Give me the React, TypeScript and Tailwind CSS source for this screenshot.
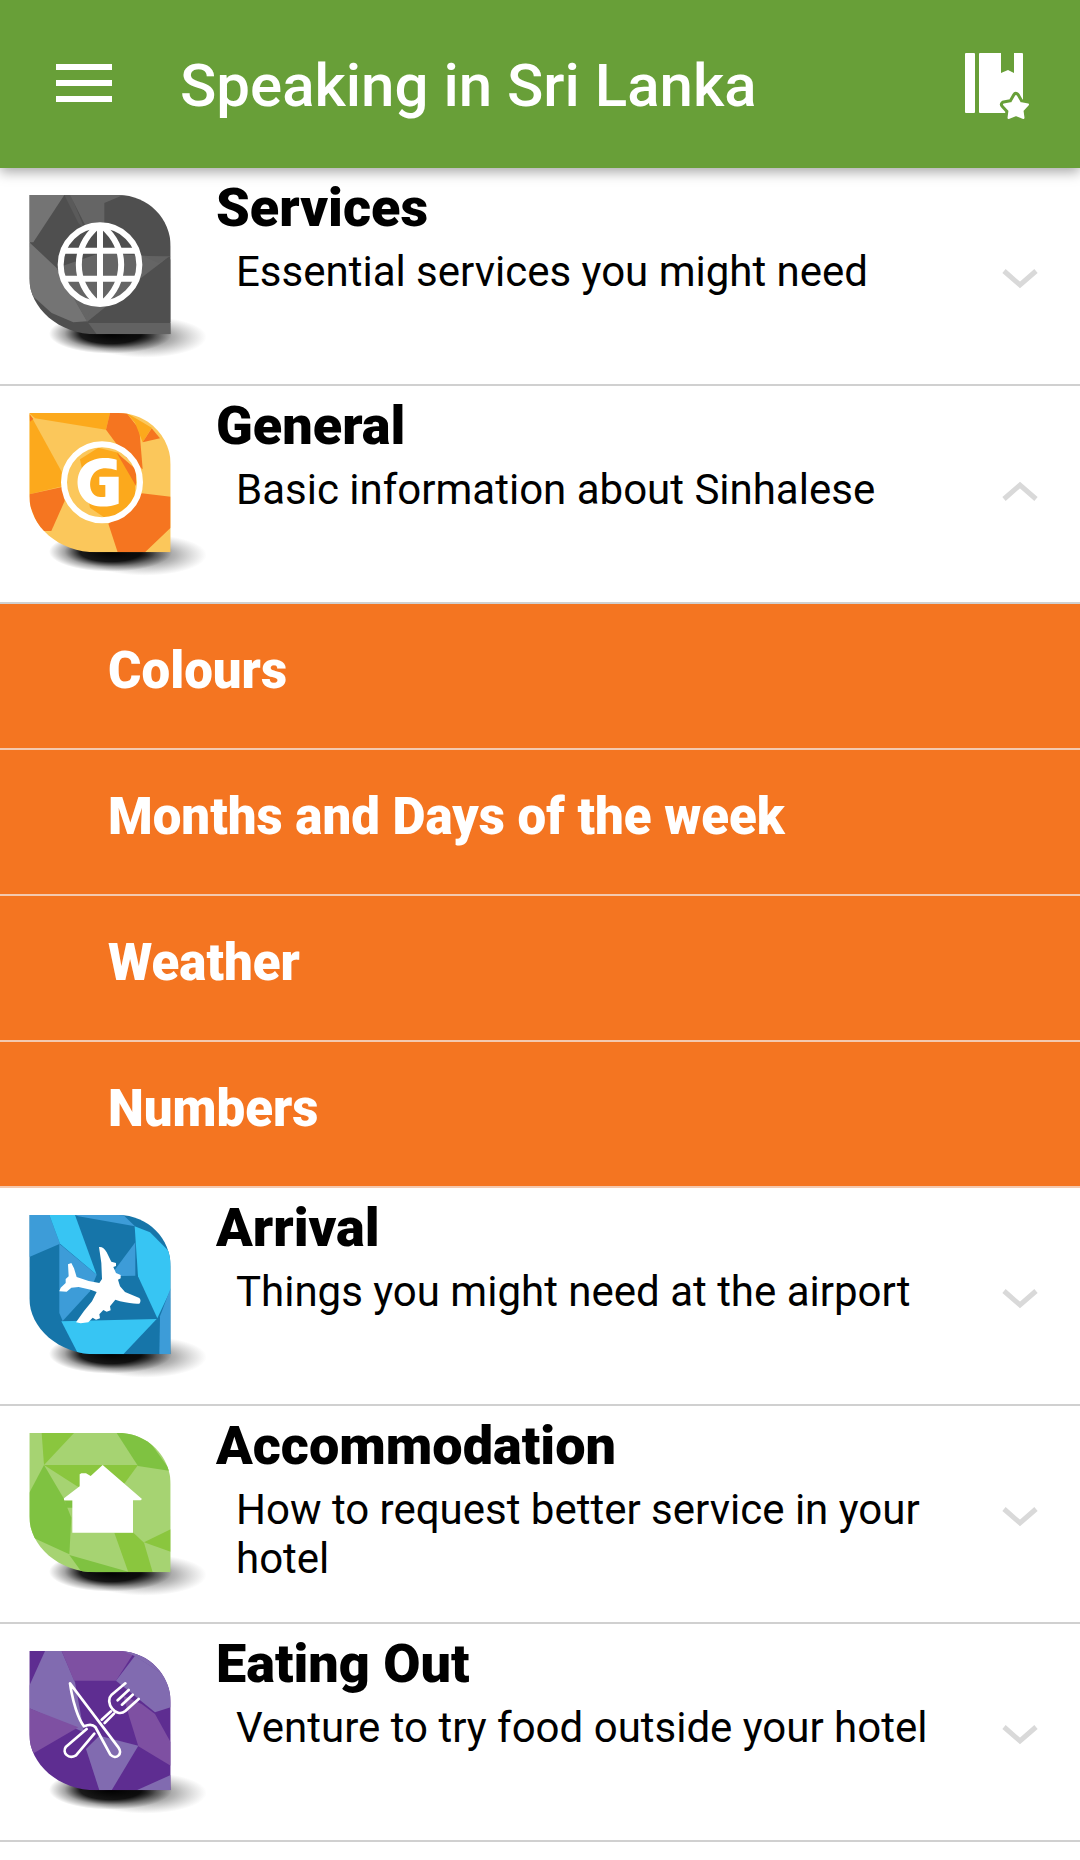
import { useState, type ReactNode } from "react";

type Category = {
  id: string;
  title: string;
  subtitle?: string;
  icon?: ReactNode;
  items?: string[];
};

const LEAF = "M58 46H325C415 46 482 118 482 200V464H260C145 464 58 385 58 295Z";
const STAR = "M51 44L55 51L63 52.500L57.500 58.500L58.500 66L51 63L43.500 66L44.500 58.500L39 52.500L47 51Z";

function Leaf({ id, base, children, glyph }: { id: string; base: string; children: ReactNode; glyph: ReactNode }) {
  return (
    <svg viewBox="-30 -35 648 576" className="h-48 w-[216px] shrink-0" aria-hidden="true">
      <defs>
        <clipPath id={`${id}-clip`}>
          <path d={LEAF} />
        </clipPath>
        <radialGradient id={`${id}-dark`}>
          <stop offset="0" stopColor="#000" />
          <stop offset="0.5" stopColor="#000" stopOpacity="0.9" />
          <stop offset="0.75" stopColor="#000" stopOpacity="0.35" />
          <stop offset="1" stopColor="#000" stopOpacity="0" />
        </radialGradient>
        <radialGradient id={`${id}-soft`}>
          <stop offset="0" stopColor="#222" stopOpacity="0.7" />
          <stop offset="0.5" stopColor="#444" stopOpacity="0.4" />
          <stop offset="1" stopColor="#666" stopOpacity="0" />
        </radialGradient>
      </defs>
      <ellipse cx="405" cy="472" rx="185" ry="62" fill={`url(#${id}-soft)`} />
      <ellipse cx="302" cy="462" rx="185" ry="60" fill={`url(#${id}-dark)`} />
      <g clipPath={`url(#${id}-clip)`}>
        <path d="M50 40H490V470H50Z" fill={base} />
        {children}
      </g>
      {glyph}
    </svg>
  );
}

function ServicesIcon() {
  return (
    <Leaf
      id="services"
      base="#4f4f4f"
      glyph={
        <g fill="none" stroke="#fff" strokeWidth="18">
          <circle cx="270" cy="255" r="118" />
          <path d="M270 137V373M164 213H376M164 297H376" />
          <path d="M262 140C188 205 188 305 262 370M278 140C352 205 352 305 278 370" />
        </g>
      }
    >
      <path d="M58 46H163L70 188H58Z" fill="#747474" />
      <path d="M163 46H182L225 150L205 130Z" fill="#5a5a5a" />
      <path d="M180 46H340L283 70V135L225 135Z" fill="#656565" />
      <path d="M58 188L140 265L232 425L190 428L125 400L58 340Z" fill="#747474" />
      <path d="M140 265L270 220V390L232 428Z" fill="#656565" />
      <path d="M270 220L475 233L390 305L232 428Z" fill="#656565" />
      <path d="M235 430H482V464H260Z" fill="#626262" />
      <path d="M400 230H482L445 250Z" fill="#626262" />
      <path d="M475 233L482 240V428H230L400 290Z" fill="#4f4f4f" />
    </Leaf>
  );
}

function GeneralIcon() {
  return (
    <Leaf
      id="general"
      base="#fbc75b"
      glyph={
        <>
          <circle cx="276" cy="254" r="114" fill="none" stroke="#fff" strokeWidth="18" />
          <path
            d="M320 186V218C300 211 278 209 264 217C235 232 233 280 257 294C266 299 278 299 286 297V262H268V237H326V318C288 332 246 330 223 306C196 279 195 226 226 200C250 180 290 177 320 186Z"
            fill="#fff"
          />
        </>
      }
    >
      <path d="M58 46L155 222L160 265L58 290Z" fill="#fca91c" />
      <path d="M58 46H300L288 96L75 62Z" fill="#fca91c" />
      <path d="M300 46H350L388 95L398 215L350 180L288 96Z" fill="#f57520" />
      <path d="M350 46L425 90L398 134L375 75Z" fill="#fca91c" />
      <path d="M398 134L425 92L450 122Z" fill="#f57520" />
      <path d="M58 290L160 267L164 310L124 400H90L58 320Z" fill="#f57520" />
      <path d="M210 185L265 150L325 165L375 250V310L295 368L240 330Z" fill="#fca91c" />
      <path d="M320 165L378 215V265Z" fill="#f57520" />
      <path d="M395 287L482 297V390L405 464H323L295 378L365 330Z" fill="#f57520" />
      <path d="M58 50L70 64L60 72Z" fill="#f57520" />
    </Leaf>
  );
}

function ArrivalIcon() {
  return (
    <Leaf
      id="arrival"
      base="#1675a9"
      glyph={
        <path
          d="M267 142Q280 140 290 158L304 186L318 190V199L310 202L318 220L332 226V236L324 240L330 260L345 277L388 295Q395 303 388 312Q370 314 330 305L316 300L300 320L302 332L290 336L280 331L268 344L270 356L258 360L248 354L235 368L212 371L198 368L222 334L246 305L260 277L242 270L206 262L184 264L170 276L148 275L152 264L167 250V238L176 230L174 194L184 190L192 206L200 232L236 244L268 250L276 238L274 190Z"
          fill="#fff"
        />
      }
    >
      <path d="M58 46H118L150 132L58 172Z" fill="#3d9cd8" />
      <path d="M118 46H195L260 225L150 132Z" fill="#37c5f3" />
      <path d="M148 132L260 225L240 275L158 364L148 340Z" fill="#3d9cd8" />
      <path d="M195 46H340L375 80L205 50Z" fill="#3d9cd8" />
      <path d="M376 128V228L300 230Z" fill="#3d9cd8" />
      <path d="M374 80L420 98L482 160V270L442 356L384 230Z" fill="#37c5f3" />
      <path d="M482 265V464H448L450 350Z" fill="#3d9cd8" />
      <path d="M154 365L440 358L340 464H205Z" fill="#37c5f3" />
    </Leaf>
  );
}

function AccommodationIcon() {
  return (
    <Leaf
      id="accommodation"
      base="#a6d372"
      glyph={<path d="M278 142L396 244L392 248H369V345H187V248H162V242L209 206V170L214 167H228L242 175Z" fill="#fff" />}
    >
      <path d="M95 46H192L102 142Z" fill="#8ac63e" />
      <path d="M102 142L160 240L184 300L178 410L58 355V225Z" fill="#7fc241" />
      <path d="M102 142H384L345 195L280 240L200 205Z" fill="#8ac63e" />
      <path d="M165 250H190V270H168Z" fill="#7fc241" />
      <path d="M320 46H400L482 160L384 145Z" fill="#7fc241" />
      <path d="M178 412L355 462L340 470H220Z" fill="#7fc241" />
      <path d="M313 345H370L402 375L428 464H355Z" fill="#8ac63e" />
      <path d="M402 374L482 335V402Z" fill="#8ac63e" />
    </Leaf>
  );
}

function EatingIcon() {
  return (
    <Leaf
      id="eating"
      base="#5e2d91"
      glyph={
        <g fill="none" stroke="#fff" strokeWidth="8" strokeLinecap="round" strokeLinejoin="round">
          <path d="M180 143L325 335C340 355 318 374 301 357L256 274Q245 262 222 272C205 250 188 200 180 143Z" />
          <path d="M230 280L168 333C155 350 175 373 198 359L253 294" />
          <path d="M275 252L303 227M284 262L312 234" />
          <path d="M346 143L305 177C282 200 318 249 346 226L386 190M356 163L323 194M368 177L336 207" />
        </g>
      }
    >
      <path d="M105 46H155L195 140L222 290L58 218V150Z" fill="#816bb0" />
      <path d="M155 46H375L318 135H192Z" fill="#7e50a2" />
      <path d="M375 60L482 130V215L435 230L318 135Z" fill="#816bb0" />
      <path d="M340 46H400L482 130L375 62Z" fill="#816bb0" />
      <path d="M58 218L205 275L58 360Z" fill="#7e50a2" />
      <path d="M340 180L395 205L435 235L482 320V390L385 332L358 245Z" fill="#7e50a2" />
      <path d="M228 340L268 300L385 330L305 464H268Z" fill="#816bb0" />
      <path d="M380 464L482 418V464Z" fill="#816bb0" />
    </Leaf>
  );
}

const categories: Category[] = [
  { id: "services", title: "Services", subtitle: "Essential services you might need", icon: <ServicesIcon /> },
  {
    id: "general",
    title: "General",
    subtitle: "Basic information about Sinhalese",
    icon: <GeneralIcon />,
    items: ["Colours", "Months and Days of the week", "Weather", "Numbers"],
  },
  { id: "arrival", title: "Arrival", subtitle: "Things you might need at the airport", icon: <ArrivalIcon /> },
  {
    id: "accommodation",
    title: "Accommodation",
    subtitle: "How to request better service in your hotel",
    icon: <AccommodationIcon />,
  },
  { id: "eating", title: "Eating Out", subtitle: "Venture to try food outside your hotel", icon: <EatingIcon /> },
  { id: "shopping", title: "Shopping" },
];

function Chevron({ open }: { open: boolean }) {
  return (
    <svg viewBox="0 0 48 48" className="h-12 w-12" fill="none" stroke="#d9d9d9" strokeWidth="5" aria-hidden="true">
      <path d={open ? "M8 29L24 15L40 29" : "M8 19L24 33L40 19"} />
    </svg>
  );
}

function CategoryRow({ category, open, onToggle }: { category: Category; open: boolean; onToggle: () => void }) {
  return (
    <li>
      <button
        type="button"
        aria-expanded={open}
        onClick={onToggle}
        className="flex min-h-[218px] w-full items-stretch border-b-2 border-[#d0d0d0] bg-white text-left text-black"
      >
        {category.icon ?? <span className="w-[216px] shrink-0" />}
        <span className="flex flex-1 flex-col pt-2">
          <span className="text-[54px] leading-[64px] font-black">{category.title}</span>
          <span className="mt-[7px] pl-5 text-[42px] leading-[49px]">{category.subtitle}</span>
        </span>
        <span className="flex w-[120px] shrink-0 items-center justify-center">
          <Chevron open={open} />
        </span>
      </button>
      {open && category.items && (
        <ul>
          {category.items.map((item) => (
            <li key={item}>
              <button
                type="button"
                className="block h-[146px] w-full border-b-2 border-[#f3c9b0] bg-[#f47521] pb-2.5 pl-[108px] text-left text-[51px] leading-[60px] font-black text-white"
              >
                {item}
              </button>
            </li>
          ))}
        </ul>
      )}
    </li>
  );
}

export default function App() {
  const [openId, setOpenId] = useState("general");

  return (
    <div className="flex h-screen flex-col overflow-hidden bg-white font-[Roboto,sans-serif]">
      <header className="z-10 flex h-42 shrink-0 items-center bg-[#689f38] px-[50px] text-white shadow-[0_4px_12px_rgba(0,0,0,0.35)]">
        <button type="button" aria-label="Open menu" className="pl-1.5">
          <svg viewBox="0 0 56 40" className="h-10 w-14" fill="currentColor" aria-hidden="true">
            <path d="M0 0H56V6H0ZM0 16H56V22H0ZM0 32H56V38H0Z" />
          </svg>
        </button>
        <h1 className="flex-1 pt-1 pl-[68px] text-[60px] leading-[72px] font-medium">Speaking in Sri Lanka</h1>
        <button type="button" aria-label="Saved phrases" className="pt-1">
          <svg viewBox="0 0 65 68" className="h-17 w-[65px]" aria-hidden="true">
            <g fill="#fff">
              <rect x="0" y="1" width="10" height="60" rx="1" />
              <path d="M15 1H36V21L43 18L49 21V1H57Q58 1 58 2V61H15Q14 61 14 60V2Q14 1 15 1Z" />
            </g>
            <g strokeLinejoin="round">
              <path d={STAR} fill="#689f38" stroke="#689f38" strokeWidth="8" />
              <path d={STAR} fill="#fff" stroke="#fff" strokeWidth="2" />
            </g>
          </svg>
        </button>
      </header>
      <main className="min-h-0 flex-1 overflow-y-auto [scrollbar-width:none]">
        <ul>
          {categories.map((category) => (
            <CategoryRow
              key={category.id}
              category={category}
              open={openId === category.id}
              onToggle={() => setOpenId(openId === category.id ? "" : category.id)}
            />
          ))}
        </ul>
      </main>
    </div>
  );
}
